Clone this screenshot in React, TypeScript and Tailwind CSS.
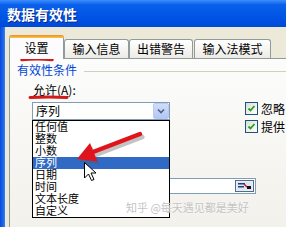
import React from 'react';

const font = { fontFamily: '"Noto Sans CJK SC", "Liberation Sans", sans-serif' };
const listFont = { fontFamily: '"Liberation Sans", "Noto Sans CJK SC", sans-serif' };

const items = ['任何值', '整数', '小数', '序列', '日期', '时间', '文本长度', '自定义'];

function Checkbox({ label }: { label: string }) {
  return (
    <div className="flex items-center h-[13px]">
      <div className="w-[13px] h-[13px] border border-[#1c5180] bg-[linear-gradient(135deg,#dcdcd7,#ffffff)] flex items-center justify-center">
        <svg width="9" height="9" viewBox="0 0 9 9">
          <path d="M1.5 4.5 L3.5 6.5 L7.5 2" fill="none" stroke="#21a121" strokeWidth="1.8" />
        </svg>
      </div>
      <span className="ml-[3px] text-[12px] leading-[12px] text-black whitespace-nowrap">{label}</span>
    </div>
  );
}

function Tab({ label, active, w }: { label: string; active?: boolean; w: string }) {
  if (active) {
    return (
      <div className={`${w} h-[24px] -mb-px relative z-10 border-x border-[#919b9c] rounded-t-[3px] bg-[#fcfcfe] flex flex-col`}>
        <div className="h-[3px] -mx-px rounded-t-[3px] bg-[linear-gradient(180deg,#e68b2c,#ffc73c)]" />
        <div className="flex-1 flex items-center justify-center text-[12px] leading-[12px] pb-[2px]">{label}</div>
      </div>
    );
  }
  return (
    <div className={`${w} h-[19px] border-x border-t border-[#919b9c] rounded-t-[3px] bg-[linear-gradient(180deg,#ffffff,#ecebe6)] flex items-center justify-center text-[12px] leading-[12px]`}>
      {label}
    </div>
  );
}

export default function App() {
  return (
    <div className="relative w-[286px] h-[227px] overflow-hidden flex flex-col bg-[#ece9d8] text-black" style={font}>
      <div className="h-[27px] shrink-0 flex items-center pl-[7px] bg-[linear-gradient(180deg,#3d8fff_0%,#0a5fea_18%,#0055e5_60%,#0049da_100%)]">
        <span className="text-[14px] leading-[14px] font-bold text-white [text-shadow:1px_1px_0_#0a2a8c]">数据有效性</span>
      </div>
      <div className="flex flex-1">
        <div className="w-[5px] bg-[linear-gradient(90deg,#0a4bd6,#1a64ee_60%,#3a7ff2)]" />
        <div className="flex-1 flex flex-col pt-[8px] pl-[4px]">
          <div className="flex items-end h-[23px]">
            <Tab label="设置" active w="w-[55px]" />
            <Tab label="输入信息" w="w-[65px]" />
            <Tab label="出错警告" w="w-[64px]" />
            <div className="ml-[1px]">
              <Tab label="输入法模式" w="w-[77px]" />
            </div>
          </div>
          <div className="flex-1 border-t border-l border-[#919b9c] bg-[linear-gradient(180deg,#fcfcfb,#f2f1eb)] pt-[5px]">
            <div className="flex items-center pl-[7px]">
              <span className="text-[12px] leading-[12px] text-[#0046d5] whitespace-nowrap">有效性条件</span>
              <div className="flex-1 h-px bg-[#d0d0bf] ml-[7px] mt-[2px]" />
            </div>
            <div className="flex h-[36px] mt-[8px]">
              <div className="ml-[22px] flex flex-col">
                <div className="pl-[1px] text-[12px] leading-[12px] h-[18px] whitespace-nowrap">
                  允许(<span className="underline">A</span>):
                </div>
                <div className="w-[138px] h-[18px] border border-[#7f9db9] bg-white flex items-center">
                  <span className="flex-1 pl-[3px] text-[12px] leading-[12px]">序列</span>
                  <div className="w-[16px] h-[16px] rounded-[2px] border border-[#b9c9ef] bg-[linear-gradient(180deg,#d0dcfa,#b3c6f4)] flex items-center justify-center">
                    <svg width="8" height="6" viewBox="0 0 8 6">
                      <path d="M1 1.5 L4 4.5 L7 1.5" fill="none" stroke="#4d6185" strokeWidth="1.6" />
                    </svg>
                  </div>
                </div>
              </div>
              <div className="ml-[75px] mt-[18px] flex flex-col gap-[5px]">
                <Checkbox label="忽略" />
                <Checkbox label="提供" />
              </div>
            </div>
            <div className="ml-[23px] mt-[58px] w-[223px] h-[16px] border border-[#7f9db9] bg-white flex items-center justify-end pr-[1px]">
              <div className="w-[19px] h-[12px] border border-[#5a6a80] bg-[#e8eef8] flex items-center justify-center">
                <svg width="15" height="8" viewBox="0 0 15 8">
                  <rect x="0" y="0" width="15" height="8" fill="#dde6f3" />
                  <rect x="1" y="1" width="7" height="1.5" fill="#1d3f7a" />
                  <rect x="1" y="4" width="6" height="1.5" fill="#1d3f7a" />
                  <path d="M7 2 L10 5" stroke="#d01818" strokeWidth="1.5" />
                  <rect x="10" y="4" width="4" height="3" fill="#111" />
                </svg>
              </div>
            </div>
          </div>
        </div>
      </div>

      {/* dropdown list */}
      <div className="absolute left-[32px] top-[120px] w-[138px] h-[98px] border border-black bg-white" style={listFont}>
        {items.map((it) => (
          <div
            key={it}
            className={`h-[12px] pl-[2px] flex items-center text-[11px] leading-[12px] whitespace-nowrap ${it === '序列' ? 'bg-[#316ac5] text-white' : 'text-black'}`}
          >
            {it}
          </div>
        ))}
      </div>

      {/* annotations */}
      <svg className="absolute left-0 top-0 pointer-events-none" width="286" height="227" viewBox="0 0 286 227">
        <path d="M22 59.5 Q37 58 52 59.5" fill="none" stroke="#d21c1c" strokeWidth="3.5" strokeLinecap="round" />
        <path d="M30 97.5 Q49 96.5 67 97.5" fill="none" stroke="#d21c1c" strokeWidth="3" strokeLinecap="round" />
        <g opacity="0.35" transform="translate(2 3)">
          <path d="M140 134 L93 152" stroke="#555" strokeWidth="5" strokeLinecap="round" />
          <polygon points="77,159 90,143 97.5,161.5" fill="#555" />
        </g>
        <path d="M140 134 L93 152" stroke="#e0141c" strokeWidth="4.5" strokeLinecap="round" />
        <polygon points="77,159 90,143 97.5,161.5" fill="#e0141c" />
        <polygon
          points="84.5,162.5 84.5,178 88.5,174 91.5,180.5 94,179.5 91,173 96,173"
          fill="#fff"
          stroke="#000"
          strokeWidth="1"
          strokeLinejoin="miter"
        />
      </svg>

      <div className="absolute left-[126px] top-[201px] text-[11px] leading-[13px] text-[#c4c4c4] whitespace-nowrap [text-shadow:0_0_2px_#ffffff]">
        知乎 @每天遇见都是美好
      </div>
    </div>
  );
}
